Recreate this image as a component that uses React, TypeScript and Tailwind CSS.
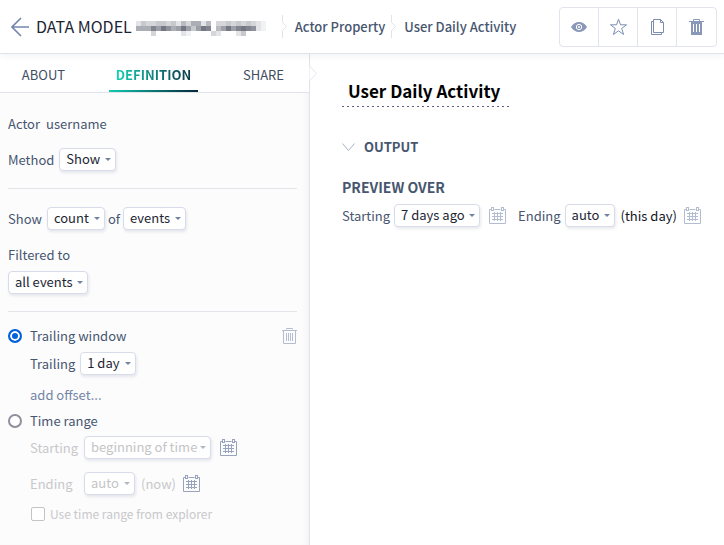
import React, { useState } from "react";

const mosaic: string[] = [
  "24334434253662503343434321",
  "66697a867a747a9057a79a9821",
  "00030000021000032000240000",
];

function Caret({ faded }: { faded?: boolean }) {
  return (
    <svg viewBox="0 0 6 3" className={`pointer-events-none col-start-1 row-start-1 mr-[5px] h-[3px] w-[6px] self-center justify-self-end ${faded ? "text-[#b4b7c0]" : "text-[#7182a3]"}`} aria-hidden="true">
      <path d="M0 0h6L3 3z" fill="currentColor" />
    </svg>
  );
}

function Pick({ label, width, value, faded }: { label: string; width: string; value: string; faded?: boolean }) {
  return (
    <span className={`inline-grid h-[23px] shrink-0 ${width}`}>
      <select
        aria-label={label}
        disabled={faded}
        defaultValue={value}
        className={`col-start-1 row-start-1 h-[23px] w-full appearance-none rounded border border-[#d8dce8] bg-white pb-px pl-1.5 text-[13px] leading-5 shadow-[1px_2px_3px_rgba(40,50,90,0.10)] outline-none ${faded ? "text-[#c4c4c6] opacity-100" : "text-[#1c2633]"}`}
      >
        <option>{value}</option>
      </select>
      <Caret faded={faded} />
    </span>
  );
}

function Calendar({ label, dark }: { label: string; dark?: boolean }) {
  return (
    <button type="button" aria-label={label} className={`shrink-0 ${dark ? "text-[#98a3be]" : "text-[#b3bdd2]"}`}>
      <svg viewBox="0 0 17 18" className="h-[18px] w-[17px]" fill="none" stroke="currentColor" aria-hidden="true">
        <path d="M2.5 2.5H.5v14h16v-14h-2M5.500 2.500h6" />
        <rect x="2.500" y=".5" width="2" height="3" />
        <rect x="12.500" y=".5" width="2" height="3" />
        <path d="M5.500 5v9M8.500 5v9M11.500 5v9M3 6.500h11M3 9.500h11M3 12.500h11" />
      </svg>
    </button>
  );
}

function CrumbEdge() {
  return (
    <svg viewBox="0 0 6 23" className="h-[23px] w-[6px] shrink-0" fill="none" stroke="#e1e4ea" aria-hidden="true">
      <path d="M.5 0v7.500l4 4-4 4V23" />
    </svg>
  );
}

function Row({ children, className = "" }: { children: React.ReactNode; className?: string }) {
  return <div className={`flex h-[23px] items-center ${className}`}>{children}</div>;
}

function Header() {
  const cell = "flex w-[39px] items-center justify-center";
  return (
    <header className="relative z-10 flex h-[54px] items-center border-b border-[#e0e3e9] bg-white pr-[7px] pl-[11px] shadow-[0_1px_8px_rgba(30,40,70,0.07)]">
      <a href="#back" aria-label="Back" className="shrink-0">
        <svg viewBox="0 0 18 20" className="h-5 w-[18px]" fill="none" stroke="#7386ac" strokeWidth="1.6" aria-hidden="true">
          <path d="M18 10H1M10 1L1 10l9 9" />
        </svg>
      </a>
      <h1 className="ml-[7px] shrink-0 pb-0.5 text-[16px] leading-6 text-[#1c2433]">DATA MODEL</h1>
      <svg viewBox="0 0 130 15" className="mt-1 ml-1 h-[15px] w-[130px] shrink-0" shapeRendering="crispEdges" aria-hidden="true">
        {mosaic.map((line, y) =>
          line.split("").map((v, x) => (
            <rect key={`${x}-${y}`} x={x * 5} y={y * 5} width="5" height="5" fill="#3c4152" opacity={parseInt(v, 16) / 14} />
          )),
        )}
      </svg>
      <nav aria-label="Breadcrumb" className="ml-4 flex shrink-0 items-center text-[13px] leading-[21px] font-medium text-[#47566f]">
        <CrumbEdge />
        <a href="#property" className="ml-[7px] pb-px">Actor Property</a>
        <span className="ml-1.5 flex"><CrumbEdge /></span>
        <a href="#activity" className="ml-[7px] pb-px">User Daily Activity</a>
      </nav>
      <div className="ml-auto flex h-10 shrink-0 divide-x divide-[#e1e4ec] rounded border border-[#e1e4ec] text-[#7d8db0]">
        <button type="button" aria-label="Preview" className={cell}>
          <svg viewBox="0 0 16 10" className="h-[10px] w-4" aria-hidden="true">
            <path d="M0 5C4-1.600 12-1.600 16 5 12 11.600 4 11.600 0 5z" fill="#8997b8" />
            <circle cx="8" cy="5" r="2.700" fill="#8997b8" stroke="#fff" />
            <circle cx="8" cy="5" r="1" fill="#fff" />
          </svg>
        </button>
        <button type="button" aria-label="Favorite" className={cell}>
          <svg viewBox="0 0 17 18" className="h-[18px] w-[17px]" fill="none" stroke="currentColor" aria-hidden="true">
            <path d="M8.500 1.200l2 5.600h6l-4.800 3.700 1.900 6-5.100-3.700-5.100 3.700 1.900-6L.5 6.800h6z" />
          </svg>
        </button>
        <button type="button" aria-label="Duplicate" className={cell}>
          <svg viewBox="0 0 13 16" className="h-4 w-[13px]" fill="none" stroke="currentColor" aria-hidden="true">
            <path d="M2.500 2.500h-2v13h10v-2M2.500.5h7l3 3v10h-10zM9.500.5v3h3" />
          </svg>
        </button>
        <button type="button" aria-label="Delete" className={cell}>
          <svg viewBox="0 0 15 16" className="h-4 w-[15px]" aria-hidden="true">
            <path d="M4.500 2.500v-2h6v2M0 2.500h15" fill="none" stroke="#8997b8" />
            <path d="M2 3h11v13H2z" fill="#8997b8" />
            <path d="M4.500 5v8M7.500 5v8M10.500 5v8" stroke="#fff" />
          </svg>
        </button>
      </div>
    </header>
  );
}

function Sidebar() {
  const [mode, setMode] = useState("trailing");
  const radio = "h-[14px] w-[14px] shrink-0 appearance-none rounded-full border-2 border-[#8f8f9d] bg-white checked:border-[#0060df] checked:bg-[#0060df] checked:shadow-[inset_0_0_0_2px_#fff]";
  return (
    <aside className="flex w-[310px] shrink-0 flex-col border-r border-[#e0e3e9] bg-[#fcfcfd] text-[13px] leading-[21px] text-[#47566f] shadow-[inset_-6px_0_8px_-6px_rgba(30,40,70,0.08)]">
      <nav className="flex h-[39px] items-stretch border-b border-[#e0e3e9] bg-white text-[#3f4d63]">
        <a href="#about" className="flex w-[87px] items-center justify-center pt-0.5">ABOUT</a>
        <a href="#definition" aria-current="page" className="relative mx-[22px] flex w-[89px] items-center justify-center pt-0.5 font-bold">
          <span className="bg-linear-to-r from-[#12d3b4] to-[#0b3a4a] bg-clip-text text-transparent">DEFINITION</span>
          <span className="absolute inset-x-0 bottom-0 h-0.5 bg-linear-to-r from-[#12cdb0] to-[#06283a]" />
        </a>
        <a href="#share" className="flex w-[87px] items-center justify-center pt-0.5">SHARE</a>
      </nav>
      <div className="px-2 pr-3">
        <section className="flex flex-col gap-[13px] border-b border-[#e3e5ea] pt-[19px] pb-[17px]">
          <Row className="gap-1.5"><span>Actor</span><span>username</span></Row>
          <Row className="gap-[5px]"><span>Method</span><Pick label="Method" width="w-[57px]" value="Show" /></Row>
        </section>
        <section className="flex flex-col border-b border-[#e3e5ea] pt-[18px] pb-[17px]">
          <Row className="gap-[5px]"><span>Show</span><Pick label="Measure" width="w-[58px]" value="count" /><span className="-mx-0.5">of</span><Pick label="Items" width="w-[63px]" value="events" /></Row>
          <Row className="mt-[13px]">Filtered to</Row>
          <Row className="mt-[5px]"><Pick label="Filter" width="w-[80px]" value="all events" /></Row>
        </section>
        <section className="flex flex-col pt-3">
          <Row className="justify-between">
            <label className="flex items-center gap-2">
              <input type="radio" name="window" checked={mode === "trailing"} onChange={() => setMode("trailing")} className={radio} />
              Trailing window
            </label>
            <button type="button" aria-label="Remove window" className="text-[#b4bccf]">
              <svg viewBox="0 0 15 16" className="h-4 w-[15px]" fill="none" stroke="currentColor" aria-hidden="true">
                <path d="M4.500 1.500v-1h6v1M0 2.500h15M1.500 3v12.500h12V3M4.500 5v8M6.500 5v8M8.500 5v8M10.500 5v8" />
              </svg>
            </button>
          </Row>
          <div className="flex flex-col pl-[22px]">
            <Row className="mt-[5px] gap-[5px]"><span>Trailing</span><Pick label="Trailing" width="w-[56px]" value="1 day" /></Row>
            <Row className="mt-2"><a href="#offset" className="text-[#7485a6]">add offset...</a></Row>
          </div>
          <Row className="mt-[3px]">
            <label className="flex items-center gap-2">
              <input type="radio" name="window" checked={mode === "range"} onChange={() => setMode("range")} className={radio} />
              Time range
            </label>
          </Row>
          <div className="flex flex-col pl-[22px] text-[#c8c8ca]">
            <Row className="mt-1"><span className="w-[54px]">Starting</span><Pick faded label="Starting" width="w-[127px]" value="beginning of time" /><span className="ml-[9px] flex"><Calendar dark label="Choose start" /></span></Row>
            <Row className="mt-[13px]"><span className="w-[54px]">Ending</span><Pick faded label="Ending" width="w-[51px]" value="auto" /><span className="ml-1.5">(now)</span><span className="ml-[7px] flex"><Calendar dark label="Choose end" /></span></Row>
            <Row className="mt-[7px]">
              <label className="flex items-center gap-[5px] text-[12px]">
                <input type="checkbox" disabled className="ml-px h-[14px] w-[14px] appearance-none rounded-xs border border-[#c4c4c8] bg-white" />
                Use time range from explorer
              </label>
            </Row>
          </div>
        </section>
      </div>
    </aside>
  );
}

function Content() {
  return (
    <main className="relative min-w-0 flex-1 px-8 pt-[22px] text-[13px] leading-[21px] text-[#47566f]">
      <svg viewBox="0 0 8 15" className="absolute top-3 -left-px h-[15px] w-2" aria-hidden="true">
        <path d="M.5 0l7 7.500-7 7.500" fill="#fff" stroke="#e3e6eb" />
      </svg>
      <input aria-label="Name" defaultValue="User Daily Activity" className="block h-[31px] w-[169px] bg-[repeating-linear-gradient(90deg,#5b6080_0_2px,transparent_2px_5px)] bg-[length:100%_1px] bg-bottom bg-no-repeat pb-0.5 pl-1.5 text-[17px] leading-7 font-bold text-black outline-none" />
      <button type="button" className="mt-7 flex h-[23px] items-center gap-[9px] font-bold">
        <svg viewBox="0 0 13 8" className="h-2 w-[13px]" fill="none" stroke="#a9b1c2" aria-hidden="true"><path d="M.5.5l6 7 6-7" /></svg>
        OUTPUT
      </button>
      <h2 className="mt-[18px] text-[14px] leading-[23px] font-bold">PREVIEW OVER</h2>
      <Row className="mt-[5px] whitespace-nowrap">
        <span>Starting</span>
        <span className="ml-1 flex"><Pick label="Preview start" width="w-[86px]" value="7 days ago" /></span>
        <span className="ml-[9px] flex"><Calendar label="Choose preview start" /></span>
        <span className="ml-3">Ending</span>
        <span className="ml-1 flex"><Pick label="Preview end" width="w-[50px]" value="auto" /></span>
        <span className="ml-1.5 text-[#10161f]">(this day)</span>
        <span className="ml-[7px] flex"><Calendar label="Choose preview end" /></span>
      </Row>
    </main>
  );
}

export default function App() {
  return (
    <div className="flex min-h-screen flex-col bg-white font-['Noto_Sans_CJK_SC','Noto_Sans',sans-serif]">
      <Header />
      <div className="flex flex-1">
        <Sidebar />
        <Content />
      </div>
    </div>
  );
}
